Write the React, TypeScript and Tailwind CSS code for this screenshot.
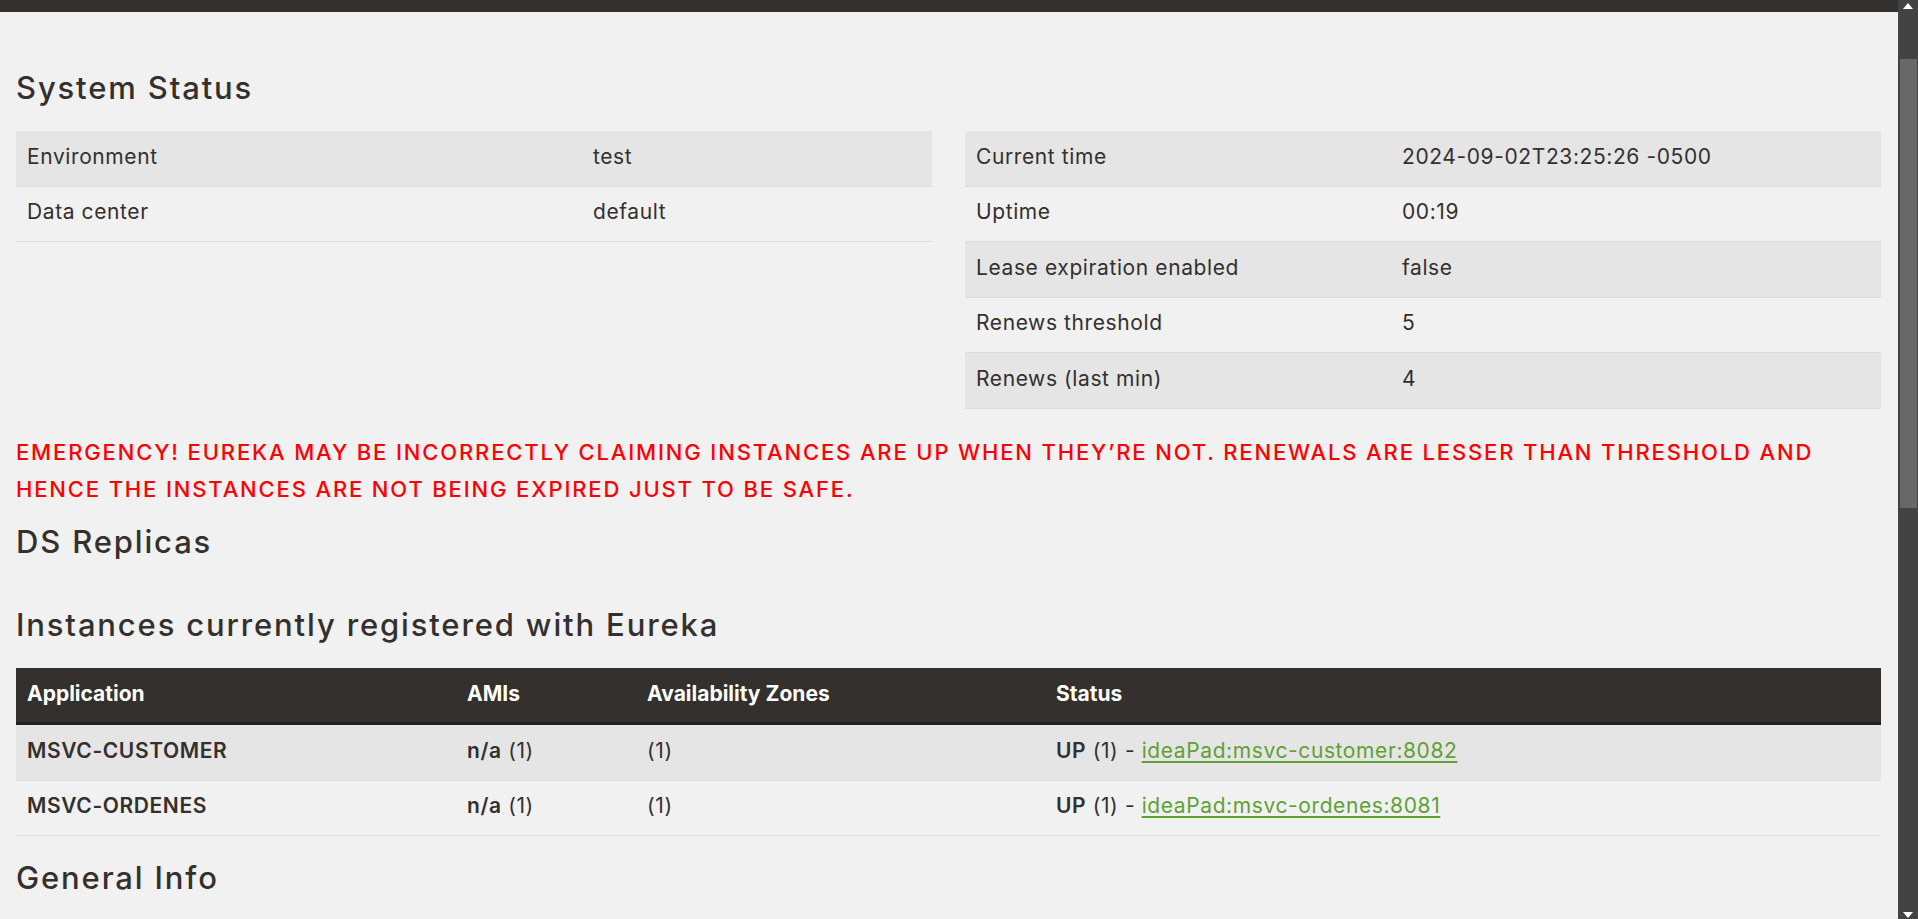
import React from 'react';

const statusLeft = [
  ['Environment', 'test'],
  ['Data center', 'default'],
];

const statusRight = [
  ['Current time', '2024-09-02T23:25:26 -0500'],
  ['Uptime', '00:19'],
  ['Lease expiration enabled', 'false'],
  ['Renews threshold', '5'],
  ['Renews (last min)', '4'],
];

const instances = [
  { app: 'MSVC-CUSTOMER', link: 'ideaPad:msvc-customer:8082' },
  { app: 'MSVC-ORDENES', link: 'ideaPad:msvc-ordenes:8081' },
];

const headingCls = 'text-[31px] leading-[36px] font-medium tracking-[1.85px] text-[#34302d]';

function KeyValueTable({ rows, labelWidth }: { rows: string[][]; labelWidth: string }) {
  return (
    <div>
      {rows.map(([label, value], i) => (
        <div
          key={label}
          className={`flex h-[55.5px] items-center border-b border-[#dcdde0] pb-[4px] ${i % 2 === 0 ? 'bg-[#e5e5e5]' : ''}`}
        >
          <div className={`${labelWidth} shrink-0 px-[11px]`}>{label}</div>
          <div className="px-[11px]">{value}</div>
        </div>
      ))}
    </div>
  );
}

function Scrollbar() {
  return (
    <div className="flex w-[20px] shrink-0 flex-col bg-[#434343]">
      <div className="flex h-[59px] justify-center pt-[3px]">
        <svg width="10" height="6" viewBox="0 0 10 6">
          <path d="M5 0L10 6H0z" fill="#ffffff" />
        </svg>
      </div>
      <div className="ml-[2px] mr-[1px] h-[449px] bg-[#686868]" />
      <div className="flex-1" />
      <div className="flex justify-center pb-[1px]">
        <svg width="10" height="6" viewBox="0 0 10 6">
          <path d="M0 0H10L5 6z" fill="#ffffff" />
        </svg>
      </div>
    </div>
  );
}

export default function App() {
  return (
    <div
      className="flex h-[919px] overflow-hidden bg-[#f1f1f1] text-[21px] text-[#34302d]"
      style={{ fontFamily: 'Inter, "Noto Sans", sans-serif' }}
    >
      <div className="min-w-0 flex-1">
        <div className="h-[12px] bg-[#34302d]" />

        <div className="pl-4 pr-[17px] tracking-[0.6px]">
          <h2 className={`mt-[58px] ${headingCls}`}>System Status</h2>

          <div className="mt-[25px] grid grid-cols-2 gap-[33px]">
            <KeyValueTable rows={statusLeft} labelWidth="w-[566px]" />
            <KeyValueTable rows={statusRight} labelWidth="w-[426px]" />
          </div>

          <p className="mt-[25px] text-[22px] leading-[37.5px] font-medium tracking-[1.85px] text-[#ff0000] uppercase">
            EMERGENCY! EUREKA MAY BE INCORRECTLY CLAIMING INSTANCES ARE UP WHEN THEY’RE NOT. RENEWALS ARE LESSER THAN THRESHOLD AND HENCE THE INSTANCES ARE NOT BEING EXPIRED JUST TO BE SAFE.
          </p>

          <h2 className={`mt-[15px] ${headingCls}`}>DS Replicas</h2>

          <h2 className={`mt-[47.5px] ${headingCls}`}>Instances currently registered with Eureka</h2>

          {/* instances table */}
          <div className="mt-[25px]">
            <div className="flex h-[57px] items-center border-b-[3px] border-[#222120] bg-[#34302d] pb-[2px] font-bold tracking-normal text-white">
              <div className="w-[440px] shrink-0 px-[11px]">Application</div>
              <div className="w-[180px] shrink-0 px-[11px]">AMIs</div>
              <div className="w-[409px] shrink-0 px-[11px]">Availability Zones</div>
              <div className="px-[11px]">Status</div>
            </div>
            {instances.map((inst, i) => (
              <div
                key={inst.app}
                className={`flex h-[55.5px] items-center border-b border-[#dcdde0] pb-[4px] ${i % 2 === 0 ? 'bg-[#e5e5e5]' : ''}`}
              >
                <div className="w-[440px] shrink-0 px-[11px] font-semibold">{inst.app}</div>
                <div className="w-[180px] shrink-0 px-[11px]">
                  <span className="font-semibold">n/a</span> (1)
                </div>
                <div className="w-[409px] shrink-0 px-[11px]">(1)</div>
                <div className="px-[11px]">
                  <span className="font-semibold">UP</span> (1) -{' '}
                  <a href="#" className="text-[#5fa134] underline decoration-2 underline-offset-[3px]">
                    {inst.link}
                  </a>
                </div>
              </div>
            ))}
          </div>

          <h2 className={`mt-[24px] ${headingCls}`}>General Info</h2>
        </div>
      </div>
      <Scrollbar />
    </div>
  );
}
